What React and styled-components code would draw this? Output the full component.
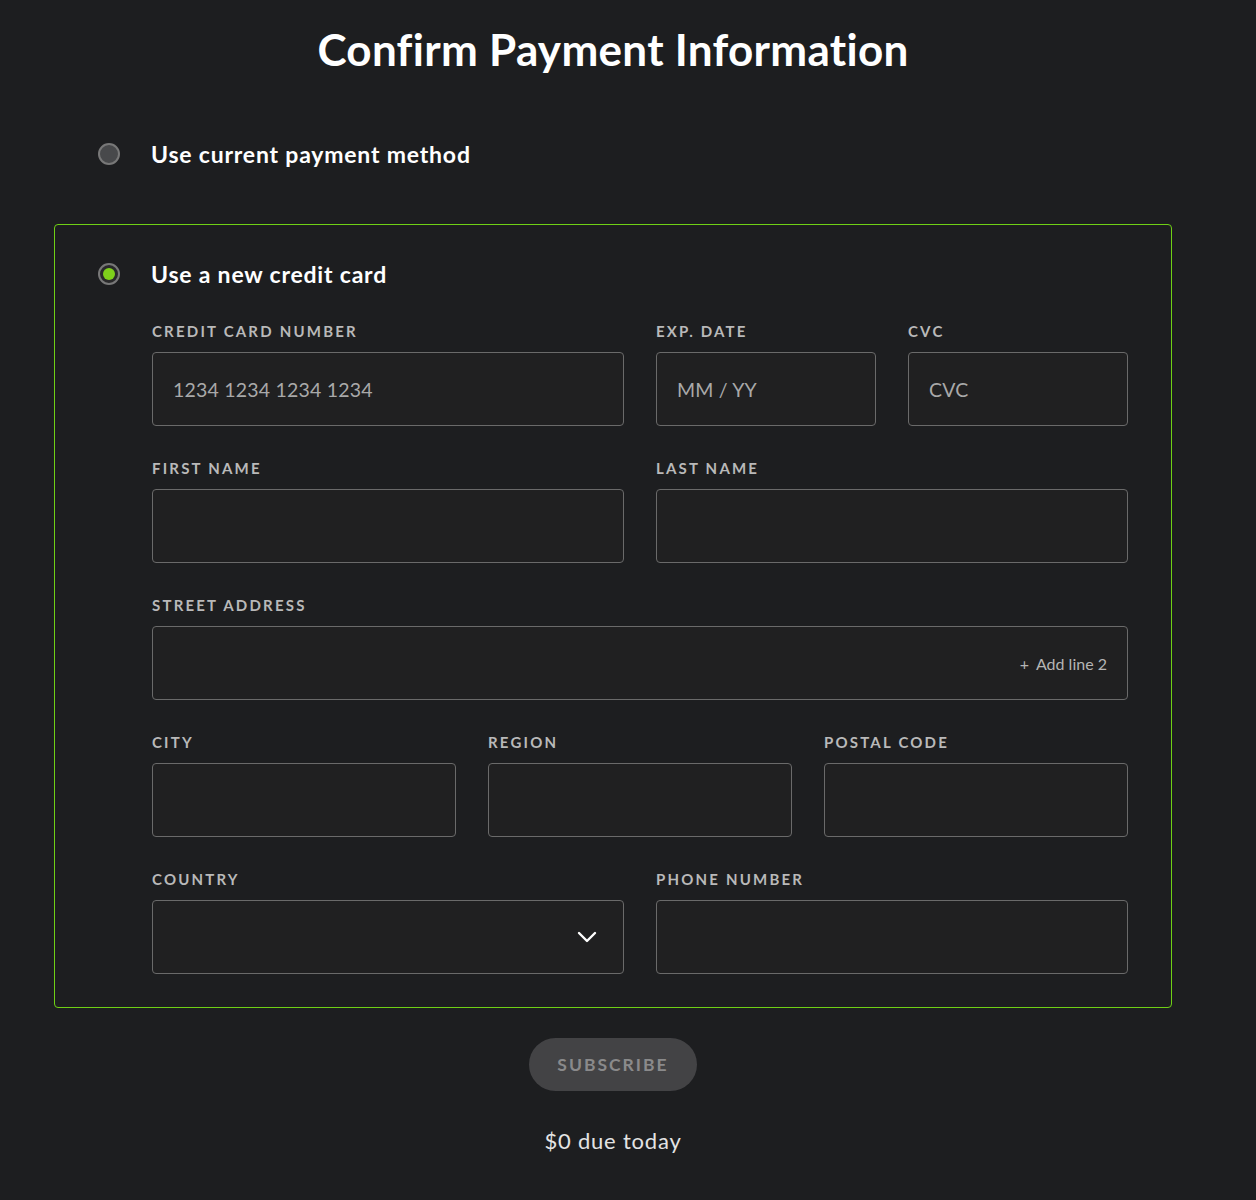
import styled, { createGlobalStyle } from 'styled-components';

const GlobalStyle = createGlobalStyle`
    html, body {
        margin: 0;
        padding: 0;
        background: #1d1e20;
    }
    body {
        font-family: Lato, "Open Sans", sans-serif;
        color: #fff;
    }
`

const Page = styled.div `
    width: 1226px;
    min-height: 1200px;
    box-sizing: border-box;
    padding: 23px 0 0;
    display: flex;
    flex-direction: column;
    align-items: center;
`

const Title = styled.h1 `
    margin: 0;
    font-size: 44px;
    line-height: 52px;
    font-weight: 700;
    letter-spacing: 0.3px;
`

const Options = styled.div `
    width: 1118px;
    margin-top: 49px;
    display: flex;
    flex-direction: column;
`

const Option = styled.div `
    box-sizing: border-box;
    border: 1px solid ${props => props.active ? '#6fd015' : 'transparent'};
    border-radius: 4px;
    padding: ${props => props.active ? '36px 43px 33px 43px' : '16px 43px 56px 43px'};
`

const RadioRow = styled.label `
    display: flex;
    align-items: center;
    gap: 31px;
    height: 26px;
    cursor: pointer;
`

const Radio = styled.span `
    width: 22px;
    height: 22px;
    box-sizing: border-box;
    border-radius: 50%;
    border: 2px solid #787878;
    background: ${props => props.checked ? '#2a2a2b' : '#48494b'};
    display: flex;
    align-items: center;
    justify-content: center;
    flex-shrink: 0;

    &::after {
        content: '';
        display: ${props => props.checked ? 'block' : 'none'};
        width: 12px;
        height: 12px;
        border-radius: 50%;
        background: #7fd11b;
    }
`

const RadioLabel = styled.span `
    font-size: 23px;
    font-weight: 700;
    letter-spacing: 0.8px;
    color: #fff;
`

const Form = styled.div `
    margin-top: 35px;
    margin-left: 54px;
    display: flex;
    flex-direction: column;
    gap: 33px;
`

const Row = styled.div `
    display: grid;
    grid-template-columns: ${props => props.cols};
    column-gap: 32px;
`

const Field = styled.div `
    display: flex;
    flex-direction: column;
    min-width: 0;
`

const Label = styled.div `
    font-size: 15px;
    line-height: 18px;
    font-weight: 700;
    letter-spacing: 2.2px;
    color: #b9b9b9;
    text-transform: uppercase;
    margin-bottom: 12px;
`

const InputBox = styled.div `
    height: 74px;
    box-sizing: border-box;
    border: 1px solid #6a6a6a;
    border-radius: 4px;
    background: #202021;
    display: flex;
    align-items: center;
    padding: 0 20px;
`

const Input = styled.input `
    flex: 1;
    min-width: 0;
    padding: 0;
    background: transparent;
    border: none;
    outline: none;
    font-family: Lato, "Open Sans", sans-serif;
    font-size: 19.5px;
    color: #fff;
    letter-spacing: 0.2px;

    &::placeholder {
        color: #a9a9a9;
    }
`

const AddLine = styled.span `
    font-size: 16px;
    color: #b5b5b5;
    display: flex;
    align-items: center;
    gap: 7px;
    white-space: nowrap;
`

const Chevron = styled.svg `
    width: 20px;
    height: 12px;
    margin-right: 6px;
`

const Footer = styled.div `
    margin-top: 30px;
    display: flex;
    flex-direction: column;
    align-items: center;
    gap: 36px;
`

const SubscribeButton = styled.button `
    width: 168px;
    height: 53px;
    border: none;
    border-radius: 27px;
    background: #434345;
    color: #8a8a8b;
    font-family: Lato, "Open Sans", sans-serif;
    font-size: 17.5px;
    font-weight: 700;
    letter-spacing: 2px;
    cursor: default;
`

const Due = styled.div `
    font-size: 22px;
    color: #e4e4e4;
    letter-spacing: 0.8px;
`

function TextField({ label, placeholder, children }) {
    return (
        <Field>
            <Label>{label}</Label>
            <InputBox>
                <Input placeholder={placeholder} />
                {children}
            </InputBox>
        </Field>
    )
}

export default function App() {
    return (
        <Page>
            <GlobalStyle />
            <Title>Confirm Payment Information</Title>
            <Options>
                <Option>
                    <RadioRow>
                        <Radio />
                        <RadioLabel>Use current payment method</RadioLabel>
                    </RadioRow>
                </Option>
                <Option active>
                    <RadioRow>
                        <Radio checked />
                        <RadioLabel>Use a new credit card</RadioLabel>
                    </RadioRow>
                    <Form>
                        <Row cols="472px 220px 220px">
                            <TextField label="Credit card number" placeholder="1234 1234 1234 1234" />
                            <TextField label="Exp. date" placeholder="MM / YY" />
                            <TextField label="CVC" placeholder="CVC" />
                        </Row>
                        <Row cols="1fr 1fr">
                            <TextField label="First name" />
                            <TextField label="Last name" />
                        </Row>
                        <Row cols="1fr">
                            <TextField label="Street address">
                                <AddLine><span>+</span>Add line 2</AddLine>
                            </TextField>
                        </Row>
                        <Row cols="1fr 1fr 1fr">
                            <TextField label="City" />
                            <TextField label="Region" />
                            <TextField label="Postal code" />
                        </Row>
                        <Row cols="1fr 1fr">
                            <TextField label="Country">
                                <Chevron viewBox="0 0 20 12">
                                    <path d="M2 2 L10 10 L18 2" fill="none" stroke="#fff" strokeWidth="2.4" strokeLinecap="round" strokeLinejoin="round" />
                                </Chevron>
                            </TextField>
                            <TextField label="Phone number" />
                        </Row>
                    </Form>
                </Option>
            </Options>
            <Footer>
                <SubscribeButton type="button">SUBSCRIBE</SubscribeButton>
                <Due>$0 due today</Due>
            </Footer>
        </Page>
    )
}
